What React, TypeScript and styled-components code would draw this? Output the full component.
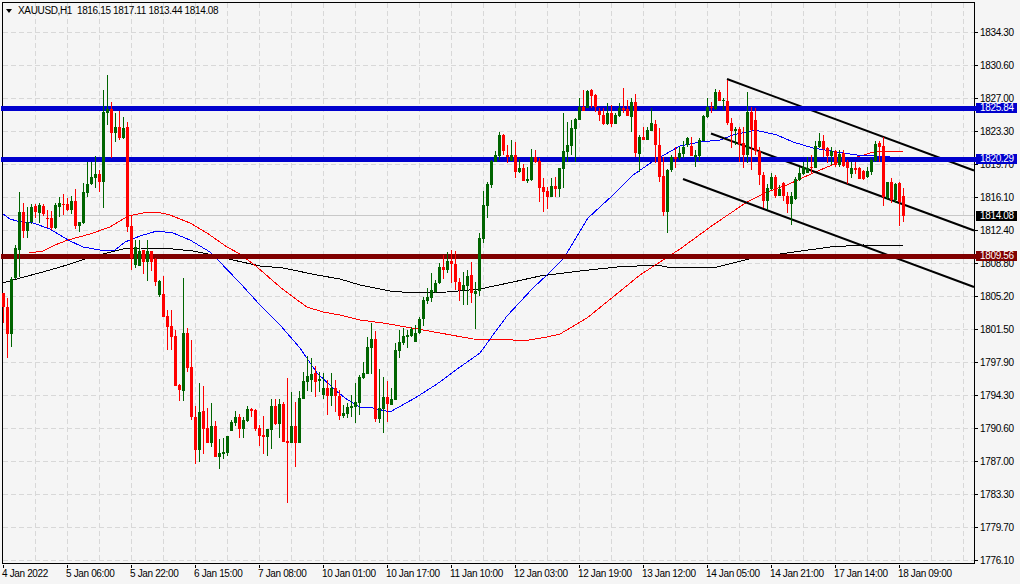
import React from "react";
import styled, { createGlobalStyle } from "styled-components";

const GlobalStyle = createGlobalStyle`
  html, body { margin: 0; padding: 0; background: #f5f5f5; }
  body { font-family: "Liberation Sans", Arial, sans-serif; }
`;

const Shell = styled.div`
  position: relative;
  width: 1020px;
  height: 584px;
  overflow: hidden;
  display: grid;
  grid-template-columns: 975px 45px;
  grid-template-rows: 565px 19px;
  background: #f5f5f5;
  color: #000;
  font-size: 10px;
  letter-spacing: -0.35px;
  line-height: 1;
`;

const Plot = styled.div`
  position: relative;
  margin: 2px 0 0 2px;
  border: 1px solid #000;
  width: 971px;
  height: 560px;
`;

const ChartSvg = styled.svg`
  position: absolute;
  inset: 0;
  display: block;
  overflow: visible;
`;

const Legend = styled.div`
  position: absolute;
  left: 3px;
  top: 3px;
  display: flex;
  align-items: center;
  gap: 6px;
  white-space: pre;
  background: transparent;
`;

const LegendCaret = styled.span`
  width: 0;
  height: 0;
  border-left: 3.5px solid transparent;
  border-right: 3.5px solid transparent;
  border-top: 4px solid #000;
`;

const PriceAxis = styled.div`
  display: flex;
  flex-direction: column;
  padding-top: 16px;
`;

const PriceTick = styled.div`
  position: relative;
  height: 33px;
  flex: none;
  display: flex;
  align-items: center;
  padding-left: 5px;
  &::before {
    content: "";
    position: absolute;
    left: 0;
    top: 16px;
    width: 3px;
    height: 1px;
    background: #000;
  }
`;

const TimeAxis = styled.div`
  grid-column: 1 / 3;
  display: flex;
  padding-left: 2px;
`;

const TimeTick = styled.div`
  position: relative;
  flex: none;
  width: 64px;
  white-space: nowrap;
  padding-top: 4px;
  &::before {
    content: "";
    position: absolute;
    left: 1px;
    top: 0;
    width: 1px;
    height: 3px;
    background: #000;
  }
`;

const PriceBadge = styled.div<{ $top: number; $bg: string }>`
  position: absolute;
  left: 976px;
  top: ${(p) => p.$top}px;
  width: 41px;
  height: 10px;
  padding-left: 4px;
  box-sizing: border-box;
  display: flex;
  align-items: center;
  color: #fff;
  background: ${(p) => p.$bg};
`;

type C = [number, "g" | "r", number, number, number, number];
const candles: C[] = [
  [3,"r",293,293,307,323],[7,"r",298,307,334,358],[11,"g",277,279,334,347],[15,"g",245,248,278,279],[19,"g",192,212,250,277],[23,"r",203,212,231,238],[27,"g",207,222,231,238],[31,"g",204,207,222,224],[35,"r",204,206,212,218],[39,"g",203,205,213,223],[43,"r",204,206,214,216],[47,"r",210,218,219,228],[51,"r",211,218,228,230],[55,"g",203,205,228,229],[59,"g",197,203,207,217],[63,"r",194,204,205,215],[67,"r",198,204,210,211],[71,"g",196,201,210,214],[75,"r",189,201,226,229],[79,"g",222,222,226,232],[83,"g",183,192,223,224],[87,"g",162,184,193,197],[91,"g",162,177,184,185],[95,"g",156,174,178,188],[99,"r",170,174,182,192],[103,"g",90,112,182,208],[107,"g",75,109,113,125],[111,"r",102,109,133,158],[115,"g",113,127,133,142],[119,"r",111,127,138,140],[123,"g",117,128,138,139],[127,"r",122,127,227,232],[131,"r",215,226,258,270],[135,"g",240,247,265,268],[139,"g",240,251,266,266],[143,"r",250,250,262,274],[147,"g",240,251,262,281],[151,"r",251,251,262,271],[155,"r",258,259,282,286],[159,"g",280,281,295,297],[163,"r",276,294,317,317],[167,"r",310,316,327,350],[171,"r",310,326,337,350],[175,"r",330,336,386,386],[179,"r",384,385,390,401],[183,"g",278,333,391,401],[187,"r",328,333,368,372],[191,"r",340,367,417,420],[195,"r",406,417,450,464],[199,"g",383,412,450,462],[203,"r",386,411,429,454],[207,"r",408,428,443,443],[211,"g",403,426,443,447],[215,"r",421,426,457,457],[219,"g",439,453,457,469],[223,"g",438,452,454,459],[227,"g",436,436,453,456],[231,"g",420,422,431,431],[235,"g",411,417,423,426],[239,"r",414,417,429,438],[243,"g",417,420,429,438],[247,"g",406,409,421,422],[251,"r",408,409,411,417],[255,"r",409,410,429,431],[259,"r",425,428,436,446],[263,"r",416,435,437,454],[267,"g",429,429,437,456],[271,"g",399,406,430,449],[275,"r",399,406,424,425],[279,"g",399,404,424,438],[283,"r",402,404,442,442],[287,"r",378,441,443,503],[291,"g",392,426,443,443],[295,"r",402,426,443,467],[299,"g",391,398,443,443],[303,"g",372,381,399,399],[307,"g",356,376,382,391],[311,"g",358,374,380,392],[315,"r",366,373,382,397],[319,"g",372,379,381,392],[323,"g",373,388,395,399],[327,"r",380,388,396,415],[331,"g",373,388,396,406],[335,"r",380,388,396,412],[339,"r",390,396,416,420],
  [343,"g",405,413,416,418],[347,"g",403,407,414,418],[351,"g",395,406,408,417],[355,"g",383,402,407,423],[359,"g",375,377,403,415],[363,"g",362,373,378,379],[367,"g",337,347,374,374],[371,"g",323,339,348,374],[375,"r",331,339,419,422],[379,"g",369,408,419,423],[383,"g",377,397,409,433],[387,"r",381,397,404,422],[391,"g",388,399,405,405],[395,"g",343,350,400,400],[399,"g",330,342,351,358],[403,"g",328,336,343,345],[407,"g",330,335,337,348],[411,"g",327,329,336,337],[415,"g",325,333,342,342],[419,"g",317,319,333,334],[423,"g",297,300,319,326],[427,"g",288,297,301,304],[431,"g",273,290,298,302],[435,"g",280,283,292,293],[439,"g",263,267,283,284],[443,"r",255,267,270,279],[447,"g",252,261,270,273],[451,"r",250,261,264,283],[455,"r",251,264,282,290],[459,"r",278,282,290,301],[463,"g",272,285,290,305],[467,"g",270,276,286,305],[471,"r",262,275,293,303],[475,"g",282,291,294,329],[479,"g",233,238,291,296],[483,"g",191,205,239,243],[487,"g",182,184,206,218],[491,"g",160,161,185,188],[495,"g",151,155,162,162],[499,"g",132,135,156,160],[503,"r",134,135,151,155],[507,"r",145,155,157,163],[511,"g",140,155,161,161],[515,"r",142,155,172,178],[519,"g",159,168,172,173],[523,"r",164,168,181,181],[527,"g",167,179,181,183],[531,"g",149,157,180,181],[535,"r",150,157,162,163],[539,"r",158,161,188,202],[543,"r",178,187,192,212],[547,"r",187,191,197,209],[551,"g",178,186,197,197],[555,"r",177,186,189,197],[559,"g",168,168,189,197],[563,"g",113,151,169,188],[567,"g",122,145,152,162],[571,"g",120,128,146,155],[575,"g",118,119,129,162],[579,"g",98,107,120,120],[583,"r",90,107,111,111],[587,"g",90,91,108,108],[591,"r",89,90,96,108],[595,"r",94,95,107,112],[599,"r",108,111,115,121],[603,"r",108,115,124,125],[607,"g",103,113,124,125],[611,"r",105,113,124,127],[615,"g",113,115,124,124],[619,"g",103,108,116,117],[623,"r",88,108,110,113],[627,"r",100,109,116,116],[631,"g",98,102,117,132],[635,"r",94,102,153,157],[639,"g",135,137,154,172],[643,"r",127,137,140,140],[647,"g",127,130,140,140],[651,"g",108,123,131,131],[655,"r",120,124,145,163],[659,"r",128,145,177,182],[663,"r",157,176,212,216],[667,"g",169,170,212,233],[671,"g",155,157,170,172],[675,"r",147,157,159,168],[679,"g",147,153,158,160],
  [683,"g",141,147,154,158],[687,"g",137,138,145,147],[691,"r",137,146,156,156],[695,"g",150,155,157,167],[699,"g",138,140,156,161],[703,"g",115,116,141,141],[707,"g",98,107,117,118],[711,"r",102,107,108,113],[715,"g",89,92,109,110],[719,"r",90,92,101,101],[723,"g",98,100,101,110],[727,"r",80,101,123,125],[731,"r",118,123,131,148],[735,"g",127,129,131,145],[739,"r",127,129,144,162],[743,"r",127,143,155,168],[747,"g",92,112,155,163],[751,"r",107,112,130,170],[755,"r",108,120,151,155],[759,"r",147,151,175,185],[763,"r",172,175,201,208],[767,"g",184,188,201,210],[771,"g",173,177,189,190],[775,"r",175,177,196,198],[779,"g",185,189,196,196],[783,"r",182,183,196,201],[787,"r",192,196,204,213],[791,"g",192,196,204,225],[795,"g",177,179,199,200],[799,"g",167,173,180,181],[803,"g",162,167,174,175],[807,"g",157,168,173,173],[811,"r",155,167,168,173],[815,"g",141,146,168,168],[819,"g",133,141,147,148],[823,"r",135,141,149,157],[827,"r",147,148,156,163],[831,"g",147,151,156,165],[835,"r",150,151,165,167],[839,"g",150,154,165,167],[843,"r",150,153,166,167],[847,"r",160,162,168,184],[851,"g",162,168,174,178],[855,"r",162,168,170,174],[859,"r",167,168,179,179],[863,"r",170,171,179,180],[867,"g",167,171,177,178],[871,"g",158,160,172,175],[875,"g",141,144,161,162],[879,"r",141,143,147,162],[883,"r",137,146,197,206],[887,"g",182,182,198,200],[891,"r",178,182,200,203],[895,"g",183,184,200,203],[899,"r",182,183,202,226],[903,"r",188,196,216,222],
];

const blueMa = "3,214 10,219 17,221 33,223 50,229 68,240 83,247 100,250 115,250 125,242 140,236 157,231 173,233 190,240 210,252 217,259 240,283 260,305 280,325 300,348 317,373 333,388 340,394 348,400 360,407 373,408 390,412 415,398 437,384 460,367 480,353 493,335 507,316 533,288 548,274 562,260 567,253 588,218 613,195 633,175 655,160 680,146 700,142 720,140 733,135 755,130 777,135 793,142 813,148 837,152 857,155 877,156 890,157";
const redMa = "29,253 43,251 55,245 68,240 90,234 110,227 128,216 143,213 157,212 170,215 190,223 207,233 227,247 240,254 257,267 280,287 293,297 307,307 323,312 340,315 360,320 383,323 412,328 440,333 473,339 513,340 523,341 547,337 560,334 587,318 613,297 640,275 663,260 680,249 713,225 747,202 767,192 787,185 813,173 837,163 857,157 877,151 903,152";
const blackMa = "3,283 20,278 43,272 67,265 88,258 107,253 123,249 140,248 173,249 193,251 213,255 233,260 260,266 283,268 317,275 340,279 360,285 390,291 413,293 447,292 480,289 513,282 540,276 580,271 617,267 657,265 667,267 680,267 713,268 753,258 787,253 830,247 863,245 903,246";

const prices = ["1834.30","1830.60","1827.00","1823.30","1819.70","1816.10","1812.40","1808.80","1805.20","1801.50","1797.90","1794.30","1790.60","1787.00","1783.30","1779.70","1776.10"];
const times = ["4 Jan 2022","5 Jan 06:00","5 Jan 22:00","6 Jan 15:00","7 Jan 08:00","10 Jan 01:00","10 Jan 17:00","11 Jan 10:00","12 Jan 03:00","12 Jan 19:00","13 Jan 12:00","14 Jan 05:00","14 Jan 21:00","17 Jan 14:00","18 Jan 09:00"];

const GRID = "#d8d8d8";
const GREEN = "#006400";
const RED = "#ff0000";

function Chart() {
  const hy = prices.map((_, i) => 32.5 + 33 * i);
  const vx = Array.from({ length: 30 }, (_, i) => 35.5 + 32 * i);
  return (
    <ChartSvg width={971} height={560} viewBox="3 3 971 560">
      <g stroke={GRID} strokeWidth={1} strokeDasharray="5 3" shapeRendering="crispEdges">
        {hy.map((y) => <line key={y} x1={3} x2={974} y1={y} y2={y} />)}
        {vx.map((x) => <line key={x} x1={x} x2={x} y1={3} y2={563} />)}
      </g>
      <line x1={3} x2={974} y1={215.5} y2={215.5} stroke="#c8c8c8" strokeWidth={1} shapeRendering="crispEdges" />
      <g fill="none" strokeWidth={1} shapeRendering="crispEdges">
        <polyline points={blackMa} stroke="#000" />
        <polyline points={redMa} stroke={RED} />
        <polyline points={blueMa} stroke="#0000ff" />
      </g>
      <g stroke="#000" strokeWidth={2}>
        <line x1={727} y1={79} x2={974} y2={170.5} />
        <line x1={711} y1={133.5} x2={974} y2={230.5} />
        <line x1={683} y1={179} x2={974} y2={287} />
      </g>
      <g shapeRendering="crispEdges">
        <rect x={1} y={106} width={975} height={5} fill="#0000cd" />
        <rect x={1} y={157} width={975} height={5} fill="#0000cd" />
        <rect x={1} y={254} width={975} height={5} fill="#800000" />
        {candles.map(([x, c, hi, top, bot, lo]) => {
          const fill = c === "g" ? GREEN : RED;
          return (
            <g key={x} fill={fill}>
              <rect x={x} y={hi} width={1} height={Math.max(lo - hi, 1)} />
              <rect x={x - 1} y={top} width={3} height={Math.max(bot - top, 1)} />
            </g>
          );
        })}
      </g>
    </ChartSvg>
  );
}

export default function App() {
  return (
    <>
      <GlobalStyle />
      <Shell>
        <Plot>
          <Chart />
          <Legend>
            <LegendCaret />
            {"XAUUSD,H1  1816.15 1817.11 1813.44 1814.08"}
          </Legend>
        </Plot>
        <PriceAxis>
          {prices.map((p) => <PriceTick key={p}>{p}</PriceTick>)}
        </PriceAxis>
        <TimeAxis>
          {times.map((t) => <TimeTick key={t}>{t}</TimeTick>)}
        </TimeAxis>
        <PriceBadge $top={103} $bg="#0000cd">1825.84</PriceBadge>
        <PriceBadge $top={154} $bg="#0000cd">1820.29</PriceBadge>
        <PriceBadge $top={211} $bg="#000">1814.08</PriceBadge>
        <PriceBadge $top={251} $bg="#800000">1809.56</PriceBadge>
      </Shell>
    </>
  );
}
